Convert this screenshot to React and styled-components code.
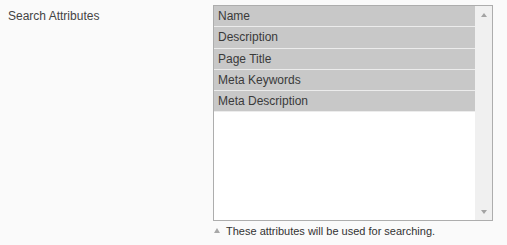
import * as React from "react";
import styled, { createGlobalStyle } from "styled-components";

const GlobalStyle = createGlobalStyle`
  html, body {
    margin: 0;
    padding: 0;
    background: #fafafa;
  }
  body {
    font-family: "Liberation Sans", Arial, sans-serif;
    color: #444;
  }
`;

const Row = styled.div`
  display: flex;
  align-items: flex-start;
  padding: 5px 0 0 8px;
`;

const Label = styled.label`
  width: 205px;
  font-size: 12px;
  line-height: 20px;
  padding-top: 1px;
  color: #444;
`;

const Field = styled.div`
  display: flex;
  flex-direction: column;
  width: 280px;
`;

const MultiSelect = styled.div`
  display: flex;
  height: 214px;
  border: 1px solid #adadad;
  background: #fff;
`;

const Options = styled.div`
  flex: 1;
  display: flex;
  flex-direction: column;
`;

const Option = styled.div`
  height: 20.3px;
  line-height: 20px;
  padding-left: 4px;
  font-size: 12px;
  color: #3a3a3a;
  background: ${(p) => (p.$selected ? "#c8c8c8" : "transparent")};
  border-bottom: 1px solid #ececec;
`;

const Scrollbar = styled.div`
  width: 17px;
  display: flex;
  flex-direction: column;
  justify-content: space-between;
  align-items: center;
  background: #f0f0f0;
  padding: 7px 0 6px;
  box-sizing: border-box;
`;

const Arrow = styled.div`
  width: 0;
  height: 0;
  border-left: 3.5px solid transparent;
  border-right: 3.5px solid transparent;
  ${(p) =>
    p.$down
      ? "border-top: 4px solid #a3a3a3;"
      : "border-bottom: 4px solid #a3a3a3;"}
`;

const Note = styled.p`
  margin: 0;
  padding: 3px 0 0 1px;
  display: flex;
  align-items: center;
  gap: 6px;
  font-size: 11px;
  line-height: 14px;
  color: #333;
`;

const NoteMark = styled.span`
  width: 0;
  height: 0;
  border-left: 3px solid transparent;
  border-right: 3px solid transparent;
  border-bottom: 5px solid #a8a8a8;
  margin-top: -1px;
`;

const attributes = [
  "Name",
  "Description",
  "Page Title",
  "Meta Keywords",
  "Meta Description",
];

export default function App() {
  return (
    <>
      <GlobalStyle />
      <Row>
        <Label>Search Attributes</Label>
        <Field>
          <MultiSelect>
            <Options>
              {attributes.map((a) => (
                <Option key={a} $selected>
                  {a}
                </Option>
              ))}
            </Options>
            <Scrollbar>
              <Arrow />
              <Arrow $down />
            </Scrollbar>
          </MultiSelect>
          <Note>
            <NoteMark />
            These attributes will be used for searching.
          </Note>
        </Field>
      </Row>
    </>
  );
}
